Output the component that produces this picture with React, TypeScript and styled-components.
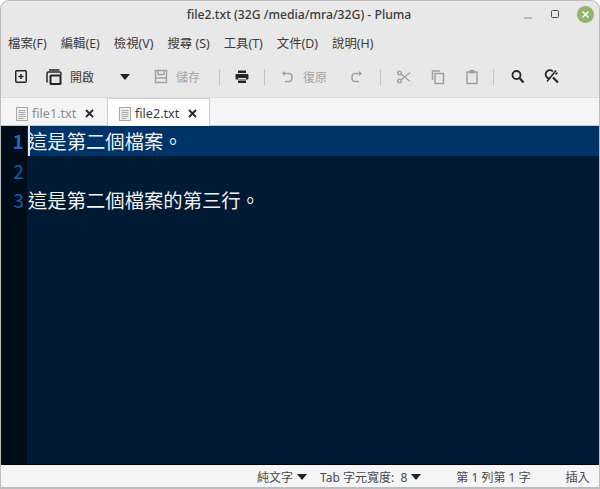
import React from "react";
import styled, { createGlobalStyle } from "styled-components";

const Global = createGlobalStyle`
  html, body { margin: 0; padding: 0; background: #ffffff; }
  body { width: 600px; height: 489px; overflow: hidden; font-family: "Noto Sans", "Noto Sans CJK TC", sans-serif; }
`;
const Win = styled.div`
  width: 600px; height: 489px; box-sizing: border-box; display: flex; flex-direction: column;
  background: #e8e8e8; border: 1px solid #bdbdbd; border-bottom-width: 2px; border-radius: 9px 9px 0 0; overflow: hidden;
`;
const TitleBar = styled.div`
  height: 27px; flex: none; position: relative; display: flex; align-items: center; justify-content: center;
  font-size: 12.2px; font-weight: 500; color: #3c3c3c; padding-right: 2px;
`;
const WinButtons = styled.div`
  position: absolute; right: 5px; top: 5px; display: flex; align-items: center; gap: 17px;
`;
const MenuBar = styled.div`
  height: 29px; flex: none; display: flex; align-items: center; padding-left: 7px; gap: 14px;
  font-size: 12.4px; color: #3c3c3c;
`;
const Toolbar = styled.div`
  height: 41px; box-sizing: border-box; flex: none; display: flex; align-items: center; padding-left: 12px;
  border-bottom: 1px solid #dcdcdc;
`;
const ToolIcon = styled.span<{ $ml: number }>`
  display: flex; width: 16px; height: 16px; flex: none; margin-left: ${p => p.$ml}px;
`;
const ToolLabel = styled.span<{ $off?: boolean; $ml: number }>`
  font-size: 12px; flex: none; margin-left: ${p => p.$ml}px; color: ${p => (p.$off ? "#a4a4a4" : "#3c3c3c")};
`;
const Sep = styled.span<{ $ml: number }>`
  width: 1px; height: 16px; flex: none; background: #c4c4c4; margin-left: ${p => p.$ml}px;
`;
const TabBar = styled.div`
  height: 28px; flex: none; display: flex; background: #f5f5f5; padding-left: 3px; border-bottom: 1px solid #c9c9c9;
  box-sizing: border-box;
`;
const Tab = styled.div<{ $active?: boolean }>`
  width: 103px; box-sizing: border-box; display: flex; align-items: center; padding: 2px 0 0 11px;
  font-size: 12.6px; color: ${p => (p.$active ? "#3c3c3c" : "#8c8c8c")};
  background: ${p => (p.$active ? "#ffffff" : "transparent")};
  border-left: ${p => (p.$active ? "1px solid #d0d0d0" : "1px solid transparent")};
  border-right: ${p => (p.$active ? "1px solid #d0d0d0" : "1px solid transparent")};
  border-top: ${p => (p.$active ? "1px solid #d0d0d0" : "1px solid transparent")};
  margin-bottom: -1px;
`;
const TabName = styled.span`
  margin-left: 4px; width: 53px; flex: none;
`;
const Editor = styled.div`
  flex: 1; min-height: 0; display: flex; background: #001a33; border-bottom: 1px solid #000; position: relative;
`;
const Gutter = styled.div`
  width: 26px; flex: none; background: #000c17; font-family: "Noto Sans CJK TC", sans-serif;
  font-size: 19.33px; text-align: right;
`;
const GutterNum = styled.div<{ $current?: boolean }>`
  height: 29.5px; line-height: 31px; padding-right: 3px; font-weight: ${p => (p.$current ? 700 : 400)};
  color: ${p => (p.$current ? "#1668bd" : "#0a5fb0")};
`;
const Lines = styled.div`
  flex: 1; min-width: 0;
`;
const Line = styled.div<{ $current?: boolean }>`
  height: 29.5px; line-height: 31px; padding-left: 1px; font-size: 19.33px; color: #f2f2f2; white-space: pre;
  font-family: "Noto Sans CJK TC", sans-serif;
  background: ${p => (p.$current ? "#003468" : "transparent")};
  position: relative;
`;
const Caret = styled.span`
  position: absolute; left: 1px; top: 0; width: 1.5px; height: 30px; background: #e8e8e8;
`;
const StatusBar = styled.div`
  height: 22px; flex: none; background: #f5f5f5; display: flex; align-items: center; font-size: 12px; color: #4a4a4a; padding: 2px 0 0 256px;
  box-sizing: border-box;
`;
const StatusItem = styled.span<{ $ml?: number }>`
  margin-left: ${p => p.$ml ?? 0}px; flex: none; display: flex; align-items: center; white-space: pre;
`;
const Arrow = styled.span<{ $ml?: number }>`
  display: inline-block; width: 0; height: 0; border-left: 5.5px solid transparent; border-right: 5.5px solid transparent;
  border-top: 6px solid #222; margin-left: ${p => p.$ml ?? 4}px;
`;

const dark = "#262626";
const dim = "#a0a0a0";

const NewIcon = () => (
  <svg width="16" height="16" viewBox="0 0 16 16" fill="none" stroke={dark} strokeWidth="1.5">
    <rect x="2.75" y="1.75" width="10.5" height="11.5" rx="1" />
    <path d="M8 5v5M5.5 7.5h5" />
  </svg>
);
const OpenIcon = () => (
  <svg width="16" height="16" viewBox="0 0 16 16" fill="none" stroke={dark} strokeWidth="1.5">
    <path d="M3 1h10.5M1 13.5V4.5Q1 3 2.5 3h11Q15 3 15 4.5V6" />
    <rect x="4.5" y="6.5" width="10" height="8.5" rx="0.5" strokeWidth="2" />
  </svg>
);
const SaveIcon = () => (
  <svg width="16" height="16" viewBox="0 0 16 16" fill="none" stroke={dim} strokeWidth="1.4">
    <path d="M2.5 1.5h11v12h-11z" />
    <path d="M5 1.5v4h6v-4M2.5 9h11" />
  </svg>
);
const PrintIcon = () => (
  <svg width="16" height="16" viewBox="0 0 16 16" fill={dark}>
    <rect x="4" y="1.5" width="8" height="2.5" />
    <rect x="1.5" y="5" width="13" height="5.5" rx="1" />
    <path d="M4 11.5h8V14H4z" />
    <rect x="4" y="9" width="8" height="1" fill="#e8e8e8" />
  </svg>
);
const UndoIcon = () => (
  <svg width="16" height="16" viewBox="0 0 16 16" fill="none" stroke={dim} strokeWidth="1.5">
    <path d="M3.5 4.5h6.5q3 0 3 4t-3 4H6" />
    <path d="M6 2L3 4.5 6 7z" fill={dim} stroke="none" />
  </svg>
);
const RedoIcon = () => (
  <svg width="16" height="16" viewBox="0 0 16 16" fill="none" stroke={dim} strokeWidth="1.5">
    <path d="M12.5 4.5H6q-3 0-3 4t3 4h4" />
    <path d="M10 2l3 2.5L10 7z" fill={dim} stroke="none" />
  </svg>
);
const CutIcon = () => (
  <svg width="16" height="16" viewBox="0 0 16 16" fill="none" stroke={dim} strokeWidth="1.4">
    <circle cx="3.5" cy="4" r="1.8" />
    <circle cx="3.5" cy="12" r="1.8" />
    <path d="M5 5l9 7.5M5 11l9-7.5" />
  </svg>
);
const CopyIcon = () => (
  <svg width="16" height="16" viewBox="0 0 16 16" fill="none" stroke={dim} strokeWidth="1.5">
    <path d="M2.5 11V2H10" />
    <rect x="5" y="4.5" width="8.5" height="10" />
  </svg>
);
const PasteIcon = () => (
  <svg width="16" height="16" viewBox="0 0 16 16" fill="none" stroke={dim} strokeWidth="1.5">
    <rect x="3" y="3" width="10" height="11.5" />
    <rect x="5.5" y="1" width="5" height="3.5" fill={dim} stroke="none" />
  </svg>
);
const FindIcon = () => (
  <svg width="16" height="16" viewBox="0 0 16 16" fill="none" stroke={dark} strokeWidth="1.8">
    <circle cx="6.5" cy="6" r="4" />
    <path d="M9.5 9l4 4.5" strokeWidth="2.2" />
  </svg>
);
const ReplaceIcon = () => (
  <svg width="16" height="16" viewBox="0 0 16 16" fill="none" stroke={dark} strokeWidth="1.8">
    <path d="M9 2.5a4.2 4.2 0 1 0-3 7" />
    <path d="M9 8.5l5 5" strokeWidth="2.2" />
    <path d="M3 12.5L12 1.5" strokeWidth="1.5" />
    <path d="M11.5 5.5l2-2" strokeWidth="1.5" />
  </svg>
);
const DocIcon = () => (
  <svg width="12" height="14" viewBox="0 0 12 14" fill="#f0f0f0" stroke="#a8a8a8" strokeWidth="1">
    <rect x="0.5" y="0.5" width="11" height="13" />
    <path d="M2.5 3.5h7M2.5 5.5h7M2.5 7.5h7M2.5 9.5h7M2.5 11.5h5" />
  </svg>
);
const CloseX = () => (
  <svg width="9" height="9" viewBox="0 0 9 9" stroke="#2c2c2c" strokeWidth="1.9">
    <path d="M1 1l7 7M8 1L1 8" />
  </svg>
);

export default function App() {
  return (
    <>
      <Global />
      <Win>
        <TitleBar>
          file2.txt (32G /media/mra/32G) - Pluma
          <WinButtons>
            <svg width="10" height="16" viewBox="0 0 10 16"><rect x="1" y="10.5" width="8" height="1" fill="#8a8a8a" /></svg>
            <svg width="10" height="16" viewBox="0 0 10 16" fill="none"><rect x="1.5" y="3.5" width="7" height="7" rx="1" stroke="#4a4a4a" /></svg>
            <svg width="17" height="17" viewBox="0 0 17 17">
              <circle cx="8.5" cy="8.5" r="8.5" fill="#8fb46f" />
              <path d="M5.5 5.5l6 6M11.5 5.5l-6 6" stroke="#fff" strokeWidth="1.5" />
            </svg>
          </WinButtons>
        </TitleBar>
        <MenuBar>
          <span>檔案(F)</span>
          <span>編輯(E)</span>
          <span>檢視(V)</span>
          <span>搜尋 (S)</span>
          <span>工具(T)</span>
          <span>文件(D)</span>
          <span>說明(H)</span>
        </MenuBar>
        <Toolbar>
          <ToolIcon $ml={0}><NewIcon /></ToolIcon>
          <ToolIcon $ml={17}><OpenIcon /></ToolIcon>
          <ToolLabel $ml={8}>開啟</ToolLabel>
          <Arrow $ml={26} />
          <ToolIcon $ml={23}><SaveIcon /></ToolIcon>
          <ToolLabel $ml={7} $off>儲存</ToolLabel>
          <Sep $ml={19} />
          <ToolIcon $ml={14}><PrintIcon /></ToolIcon>
          <Sep $ml={14} />
          <ToolIcon $ml={14}><UndoIcon /></ToolIcon>
          <ToolLabel $ml={8} $off>復原</ToolLabel>
          <ToolIcon $ml={22}><RedoIcon /></ToolIcon>
          <Sep $ml={15} />
          <ToolIcon $ml={15}><CutIcon /></ToolIcon>
          <ToolIcon $ml={18}><CopyIcon /></ToolIcon>
          <ToolIcon $ml={18}><PasteIcon /></ToolIcon>
          <Sep $ml={13} />
          <ToolIcon $ml={16}><FindIcon /></ToolIcon>
          <ToolIcon $ml={18}><ReplaceIcon /></ToolIcon>
        </Toolbar>
        <TabBar>
          <Tab>
            <DocIcon />
            <TabName>file1.txt</TabName>
            <CloseX />
          </Tab>
          <Tab $active>
            <DocIcon />
            <TabName>file2.txt</TabName>
            <CloseX />
          </Tab>
        </TabBar>
        <Editor>
          <Gutter>
            <GutterNum $current>1</GutterNum>
            <GutterNum>2</GutterNum>
            <GutterNum>3</GutterNum>
          </Gutter>
          <Lines>
            <Line $current><Caret />這是第二個檔案。</Line>
            <Line> </Line>
            <Line>這是第二個檔案的第三行。</Line>
          </Lines>
        </Editor>
        <StatusBar>
          <StatusItem>純文字<Arrow /></StatusItem>
          <StatusItem $ml={13}>Tab 字元寬度:  8<Arrow /></StatusItem>
          <StatusItem $ml={35}>第 1 列第 1 字</StatusItem>
          <StatusItem $ml={35}>插入</StatusItem>
        </StatusBar>
      </Win>
    </>
  );
}
